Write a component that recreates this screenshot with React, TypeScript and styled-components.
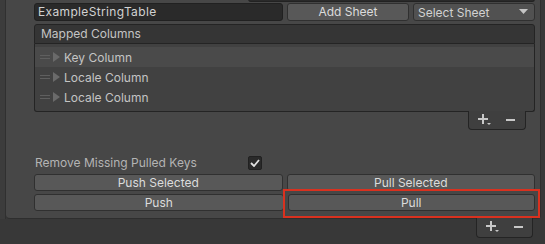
import React from "react";
import styled, { createGlobalStyle } from "styled-components";

const Global = createGlobalStyle`
  html, body { margin: 0; padding: 0; background: #383838; }
  body { font-family: Inter, "Noto Sans", sans-serif; font-size: 12px; color: #c4c4c4; }
  * { box-sizing: border-box; }
`;

const Page = styled.div`
  width: 545px;
  height: 244px;
  overflow: hidden;
  display: flex;
  background: #383838;
`;

const LeftStrip = styled.div`
  width: 6px;
  height: 219px;
  background: #3c3c3c;
  border-right: 1px solid #303030;
`;

const Column = styled.div`
  display: flex;
  flex-direction: column;
  width: 535px;
`;

const Panel = styled.div`
  height: 220px;
  margin-top: -1px;
  background: #474747;
  border: 1px solid #2e2e2e;
  border-top: none;
  border-left: none;
  border-radius: 0 0 4px 4px;
  padding: 0 5px 0 28px;
  display: flex;
  flex-direction: column;
`;

const TopStub = styled.div`
  margin-left: 214px;
  height: 3px;
  background: #2a2a2a;
  border: 1px solid #222;
  border-top: none;
  border-radius: 0 0 3px 3px;
`;

const Row = styled.div<{ $mt?: number }>`
  display: flex;
  gap: 4px;
  margin-top: ${(p) => p.$mt ?? 0}px;
`;

const TextField = styled.div`
  width: 249px;
  height: 18px;
  background: #2a2a2a;
  border: 1px solid #212121;
  border-radius: 3px;
  padding-left: 3px;
  line-height: 16px;
  letter-spacing: 0.35px;
  color: #d2d2d2;
`;

const Button = styled.div<{ $w?: number; $h?: number }>`
  width: ${(p) => (p.$w ? `${p.$w}px` : "auto")};
  flex: ${(p) => (p.$w ? "none" : "1")};
  height: ${(p) => p.$h ?? 18}px;
  background: #585858;
  border: 1px solid #303030;
  border-radius: 3px;
  text-align: center;
  line-height: ${(p) => (p.$h ?? 18) - 2}px;
  color: #dcdcdc;
`;

const Dropdown = styled.div`
  width: 122px;
  height: 18px;
  background: #515151;
  border: 1px solid #303030;
  border-radius: 3px;
  padding: 0 6px 0 4px;
  display: flex;
  align-items: center;
  justify-content: space-between;
  color: #d2d2d2;
`;

const List = styled.div`
  margin-top: 3px;
  display: flex;
  flex-direction: column;
`;

const ListHeader = styled.div`
  height: 20px;
  background: #353535;
  border: 1px solid #242424;
  border-radius: 3px 3px 0 0;
  padding-left: 6px;
  line-height: 18px;
  color: #c4c4c4;
`;

const ListBody = styled.div`
  height: 68px;
  background: #414141;
  border: 1px solid #242424;
  border-top: none;
  border-radius: 0 0 3px 3px;
  padding-top: 3px;
`;

const ListRow = styled.div<{ $active?: boolean }>`
  height: 20px;
  display: flex;
  align-items: center;
  background: ${(p) => (p.$active ? "#4a4a4a" : "transparent")};
  padding-left: 5px;
  color: #c4c4c4;
`;

const Handle = styled.span`
  width: 10px;
  height: 4px;
  border-top: 1px solid #5f5f5f;
  border-bottom: 1px solid #5f5f5f;
  margin-right: 3px;
`;

const Triangle = styled.span`
  width: 0;
  height: 0;
  border-top: 5px solid transparent;
  border-bottom: 5px solid transparent;
  border-left: 7px solid #6a6a6a;
  margin-right: 4px;
`;

const Footer = styled.div<{ $ml: number; $w: number; $h: number }>`
  margin-left: ${(p) => p.$ml}px;
  width: ${(p) => p.$w}px;
  height: ${(p) => p.$h}px;
  margin-top: -1px;
  background: #3f3f3f;
  border: 1px solid #242424;
  border-top: none;
  border-radius: 0 0 4px 4px;
  display: flex;
  align-items: center;
  justify-content: center;
  gap: 14px;
  padding-bottom: 1px;
`;

const Glyph = styled.svg`
  display: block;
`;

const Plus = () => (
  <Glyph width="14" height="12" viewBox="0 0 14 12">
    <rect x="0" y="4" width="10" height="2" fill="#c8c8c8" />
    <rect x="4" y="0" width="2" height="10" fill="#c8c8c8" />
    <path d="M9 9 L13 9 L11 11 Z" fill="#c8c8c8" />
  </Glyph>
);

const Minus = () => (
  <Glyph width="10" height="10" viewBox="0 0 10 10">
    <rect x="0" y="4" width="9" height="2" fill="#c8c8c8" />
  </Glyph>
);

const ToggleRow = styled.div`
  margin-top: 25px;
  height: 15px;
  display: flex;
  align-items: center;
  padding-left: 1px;
`;

const ToggleLabel = styled.span`
  width: 213px;
  color: #b4b4b4;
`;

const Check = styled.div`
  width: 14px;
  height: 14px;
  background: #2a2a2a;
  border: 1px solid #212121;
  border-radius: 2px;
  display: flex;
  align-items: center;
  justify-content: center;
`;

const Highlight = styled.div`
  flex: 1;
  display: flex;
  position: relative;
  &::after {
    content: "";
    position: absolute;
    top: -5px;
    left: -5px;
    right: -5px;
    bottom: -7px;
    border: 2px solid #d9311f;
    pointer-events: none;
  }
`;

const ButtonRows = styled.div`
  margin-top: 4px;
  display: flex;
  flex-direction: column;
  gap: 3px;
`;

export default function App() {
  return (
    <>
      <Global />
      <Page>
        <LeftStrip />
        <Column>
          <Panel>
            <TopStub />
            <Row $mt={1}>
              <TextField>ExampleStringTable</TextField>
              <Button $w={122}>Add Sheet</Button>
              <Dropdown>
                <span>Select Sheet</span>
                <svg width="9" height="6" viewBox="0 0 9 6">
                  <path d="M0 0 L9 0 L4.5 5 Z" fill="#c4c4c4" />
                </svg>
              </Dropdown>
            </Row>
            <List>
              <ListHeader>Mapped Columns</ListHeader>
              <ListBody>
                <ListRow $active>
                  <Handle />
                  <Triangle />
                  Key Column
                </ListRow>
                <ListRow>
                  <Handle />
                  <Triangle />
                  Locale Column
                </ListRow>
                <ListRow>
                  <Handle />
                  <Triangle />
                  Locale Column
                </ListRow>
              </ListBody>
              <Footer $ml={434} $w={58} $h={19}>
                <Plus />
                <Minus />
              </Footer>
            </List>
            <ToggleRow>
              <ToggleLabel>Remove Missing Pulled Keys</ToggleLabel>
              <Check>
                <svg width="10" height="8" viewBox="0 0 10 8">
                  <path d="M1 4 L4 7 L9 1" stroke="#e0e0e0" strokeWidth="1.8" fill="none" />
                </svg>
              </Check>
            </ToggleRow>
            <ButtonRows>
              <Row>
                <Button $h={17}>Push Selected</Button>
                <Button $h={17}>Pull Selected</Button>
              </Row>
              <Row>
                <Button $h={17}>Push</Button>
                <Highlight>
                  <Button $h={17}>Pull</Button>
                </Highlight>
              </Row>
            </ButtonRows>
          </Panel>
          <Footer $ml={470} $w={57} $h={20}>
            <Plus />
            <Minus />
          </Footer>
        </Column>
      </Page>
    </>
  );
}
